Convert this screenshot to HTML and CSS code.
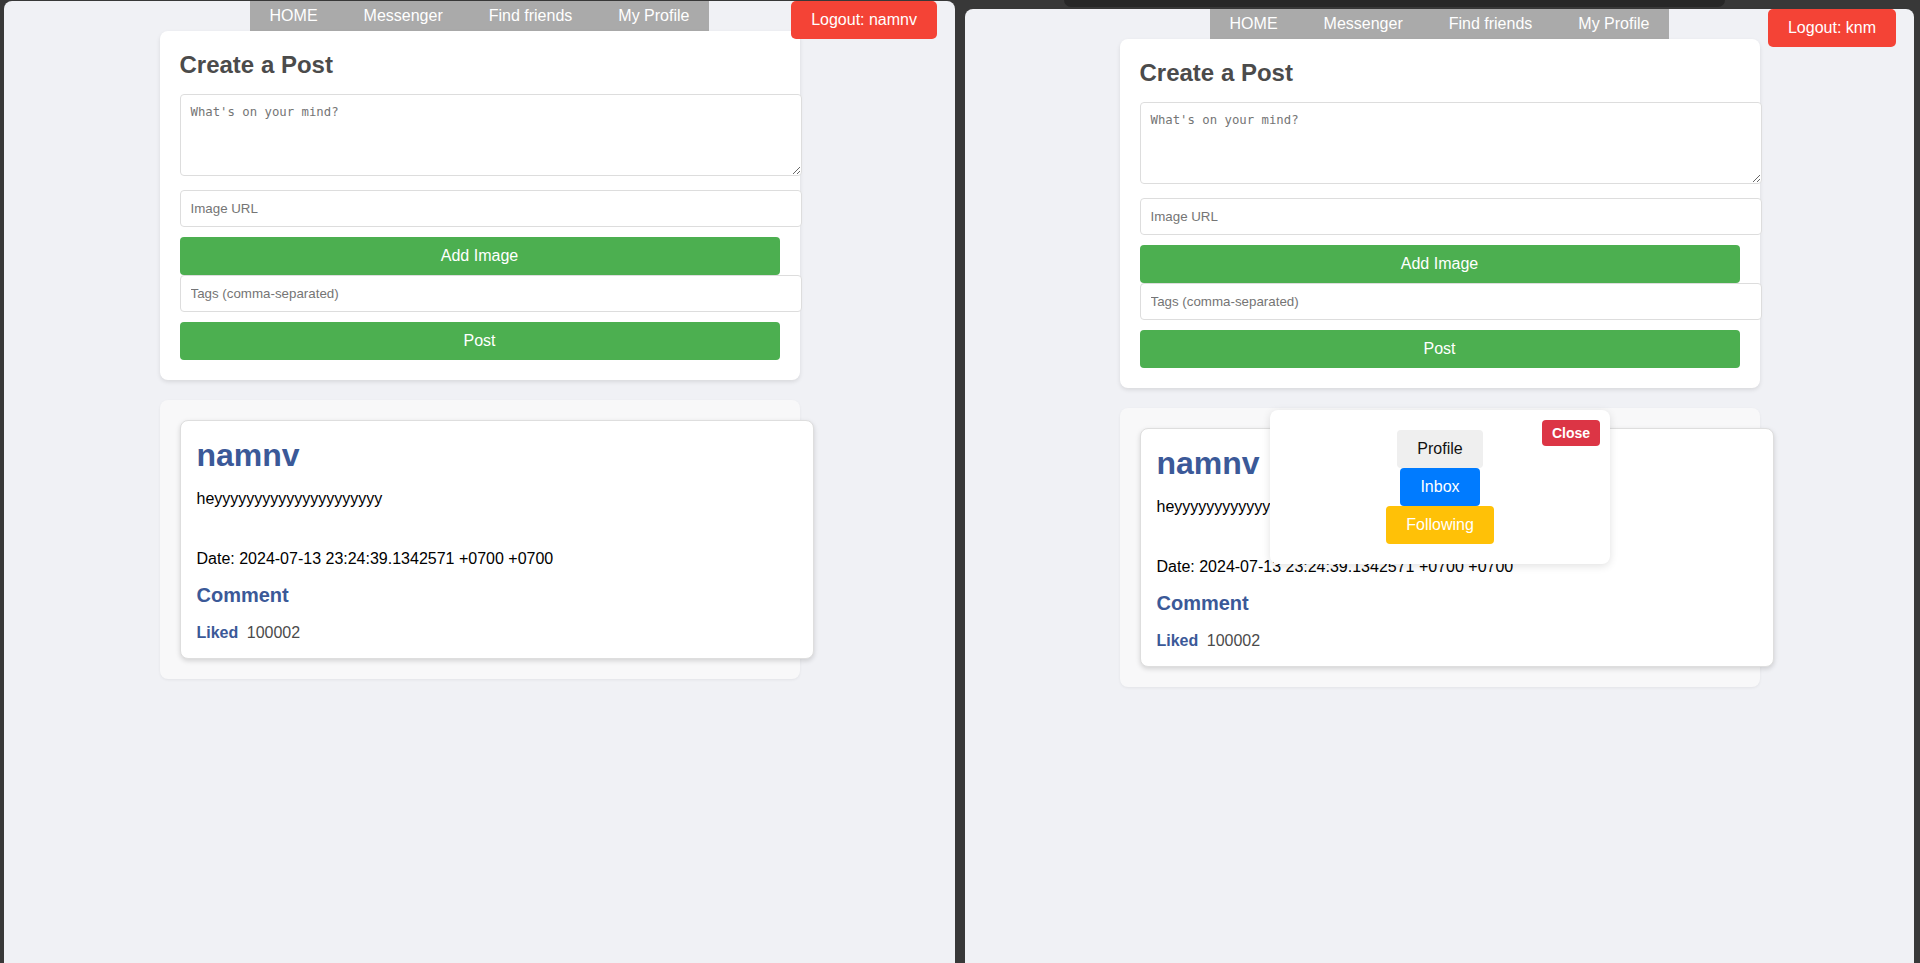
FILE: index.html
```html
<!DOCTYPE html>
<html lang="en">
<head>
<meta charset="utf-8">
<title>Social</title>
<link rel="stylesheet" href="styles.css">
</head>
<body>
<div class="tab-notch"></div>

<div class="window win-left">
  <div class="page">
    <nav class="topnav">
      <a href="#">HOME</a>
      <a href="#">Messenger</a>
      <a href="#">Find friends</a>
      <a href="#">My Profile</a>
    </nav>
    <button class="logout">Logout: namnv</button>
    <main class="container">
      <section class="card create">
        <h2 class="create-title">Create a Post</h2>
        <textarea class="field area" placeholder="What's on your mind?"></textarea>
        <input class="field url" type="text" placeholder="Image URL">
        <button class="btn-green">Add Image</button>
        <input class="field tags" type="text" placeholder="Tags (comma-separated)">
        <button class="btn-green">Post</button>
      </section>
      <section class="posts">
        <article class="post">
          <h1 class="author">namnv</h1>
          <p class="content">heyyyyyyyyyyyyyyyyyyyyy</p>
          <div class="spacer"></div>
          <p class="date">Date: 2024-07-13 23:24:39.1342571 +0700 +0700</p>
          <h3 class="comment">Comment</h3>
          <div class="likes"><span class="liked">Liked</span> <span class="count">100002</span></div>
        </article>
      </section>
    </main>
  </div>
</div>

<div class="window win-right">
  <div class="page">
    <nav class="topnav">
      <a href="#">HOME</a>
      <a href="#">Messenger</a>
      <a href="#">Find friends</a>
      <a href="#">My Profile</a>
    </nav>
    <button class="logout">Logout: knm</button>
    <main class="container">
      <section class="card create">
        <h2 class="create-title">Create a Post</h2>
        <textarea class="field area" placeholder="What's on your mind?"></textarea>
        <input class="field url" type="text" placeholder="Image URL">
        <button class="btn-green">Add Image</button>
        <input class="field tags" type="text" placeholder="Tags (comma-separated)">
        <button class="btn-green">Post</button>
      </section>
      <section class="posts">
        <article class="post">
          <h1 class="author">namnv</h1>
          <p class="content">heyyyyyyyyyyyyyyyyyyyyy</p>
          <div class="spacer"></div>
          <p class="date">Date: 2024-07-13 23:24:39.1342571 +0700 +0700</p>
          <h3 class="comment">Comment</h3>
          <div class="likes"><span class="liked">Liked</span> <span class="count">100002</span></div>
        </article>
      </section>
    </main>
    <div class="popup">
      <button class="close">Close</button>
      <button class="pbtn profile">Profile</button>
      <button class="pbtn inbox">Inbox</button>
      <button class="pbtn following">Following</button>
    </div>
  </div>
</div>
</body>
</html>
```

FILE: styles.css
```css
html, body {
  margin: 0;
  padding: 0;
}

body {
  background: #383838;
  width: 1920px;
  height: 963px;
  overflow: hidden;
  position: relative;
  font-family: "Liberation Sans", Arial, sans-serif;
}

.tab-notch {
  position: absolute;
  left: 1064px;
  top: 0;
  width: 661px;
  height: 7px;
  background: #272727;
  border-radius: 0 0 8px 8px;
}

.window {
  position: absolute;
  background: #f0f1f5;
  border-radius: 8px 8px 0 0;
  overflow: hidden;
}

.win-left {
  left: 4px;
  top: 1px;
  width: 951px;
  height: 962px;
}

.win-right {
  left: 965px;
  top: 9px;
  width: 949px;
  height: 954px;
}

.page {
  position: relative;
  height: 100%;
}

.topnav {
  display: flex;
  gap: 6px;
  width: fit-content;
  margin: 0 auto;
  background: #aaaaaa;
}

.topnav a {
  display: block;
  padding: 6px 20px;
  line-height: 18px;
  font-size: 16px;
  color: #ffffff;
  text-decoration: none;
}

.logout {
  position: absolute;
  top: 0;
  right: 18px;
  background: #f44336;
  color: #ffffff;
  border: none;
  border-radius: 5px;
  padding: 10px 20px;
  font-family: "Liberation Sans", Arial, sans-serif;
  font-size: 16px;
  line-height: 18px;
}

.container {
  width: 640px;
  margin: 0 auto;
}

.card {
  background: #ffffff;
  border-radius: 8px;
  box-shadow: 0 2px 4px rgba(0, 0, 0, 0.1);
  padding: 20px;
}

.create-title {
  margin: 0 0 15px;
  font-size: 24px;
  font-weight: bold;
  color: #4b4b4b;
  line-height: normal;
}

.field {
  display: block;
  box-sizing: content-box;
  width: 100%;
  padding: 10px;
  border: 1px solid #dddddd;
  border-radius: 4px;
  background: #ffffff;
  font-family: "Liberation Sans", Arial, sans-serif;
  font-size: 13.33px;
  color: #222;
  outline: none;
}

.field::placeholder {
  color: #757575;
}

.area {
  height: 60px;
  margin: 0 0 14px;
  font-family: "DejaVu Sans Mono", "Liberation Mono", monospace;
  font-size: 12.3px;
  line-height: 15px;
  resize: vertical;
}

.url {
  height: 15px;
  line-height: 15px;
  margin: 0 0 10px;
}

.tags {
  height: 15px;
  line-height: 15px;
  margin: 0 0 10px;
}

.btn-green {
  display: block;
  width: 100%;
  padding: 10px;
  border: none;
  border-radius: 4px;
  background: #4caf50;
  color: #ffffff;
  font-family: "Liberation Sans", Arial, sans-serif;
  font-size: 16px;
  line-height: 18px;
}

.posts {
  margin-top: 20px;
  padding: 20px;
  background: #f8f8f9;
  border-radius: 8px;
  box-shadow: 0 1px 3px rgba(0, 0, 0, 0.06);
}

.post {
  box-sizing: content-box;
  width: 100%;
  padding: 16px;
  background: #ffffff;
  border: 1px solid #dedede;
  border-radius: 8px;
  box-shadow: 0 2px 5px rgba(0, 0, 0, 0.15);
}

.author {
  margin: 0;
  font-size: 32px;
  font-weight: bold;
  color: #3b5998;
  line-height: normal;
}

.content,
.date {
  margin: 16px 0;
  font-size: 16px;
  color: #000000;
  line-height: normal;
}

.spacer {
  height: 10px;
}

.comment {
  margin: 16px 0 17px;
  font-size: 20px;
  font-weight: bold;
  color: #3b5998;
  line-height: normal;
}

.likes {
  font-size: 16px;
  line-height: normal;
}

.liked {
  font-weight: bold;
  color: #3b5998;
  margin-right: 4px;
}

.count {
  color: #4b4b4b;
}

.popup {
  position: absolute;
  left: 305px;
  top: 401px;
  width: 300px;
  padding: 20px;
  background: #ffffff;
  border-radius: 8px;
  box-shadow: 0 2px 8px rgba(0, 0, 0, 0.12);
  display: flex;
  flex-direction: column;
  align-items: center;
}

.close {
  position: absolute;
  top: 10px;
  right: 10px;
  padding: 5px 10px;
  border: none;
  border-radius: 4px;
  background: #dc3545;
  color: #ffffff;
  font-family: "Liberation Sans", Arial, sans-serif;
  font-weight: bold;
  font-size: 14px;
  line-height: 16px;
}

.pbtn {
  padding: 10px 20px;
  border: none;
  border-radius: 4px;
  font-family: "Liberation Sans", Arial, sans-serif;
  font-size: 16px;
  line-height: 18px;
}

.profile {
  background: #efefef;
  color: #111111;
}

.inbox {
  background: #007bff;
  color: #ffffff;
}

.following {
  background: #ffc107;
  color: #ffffff;
}
```
